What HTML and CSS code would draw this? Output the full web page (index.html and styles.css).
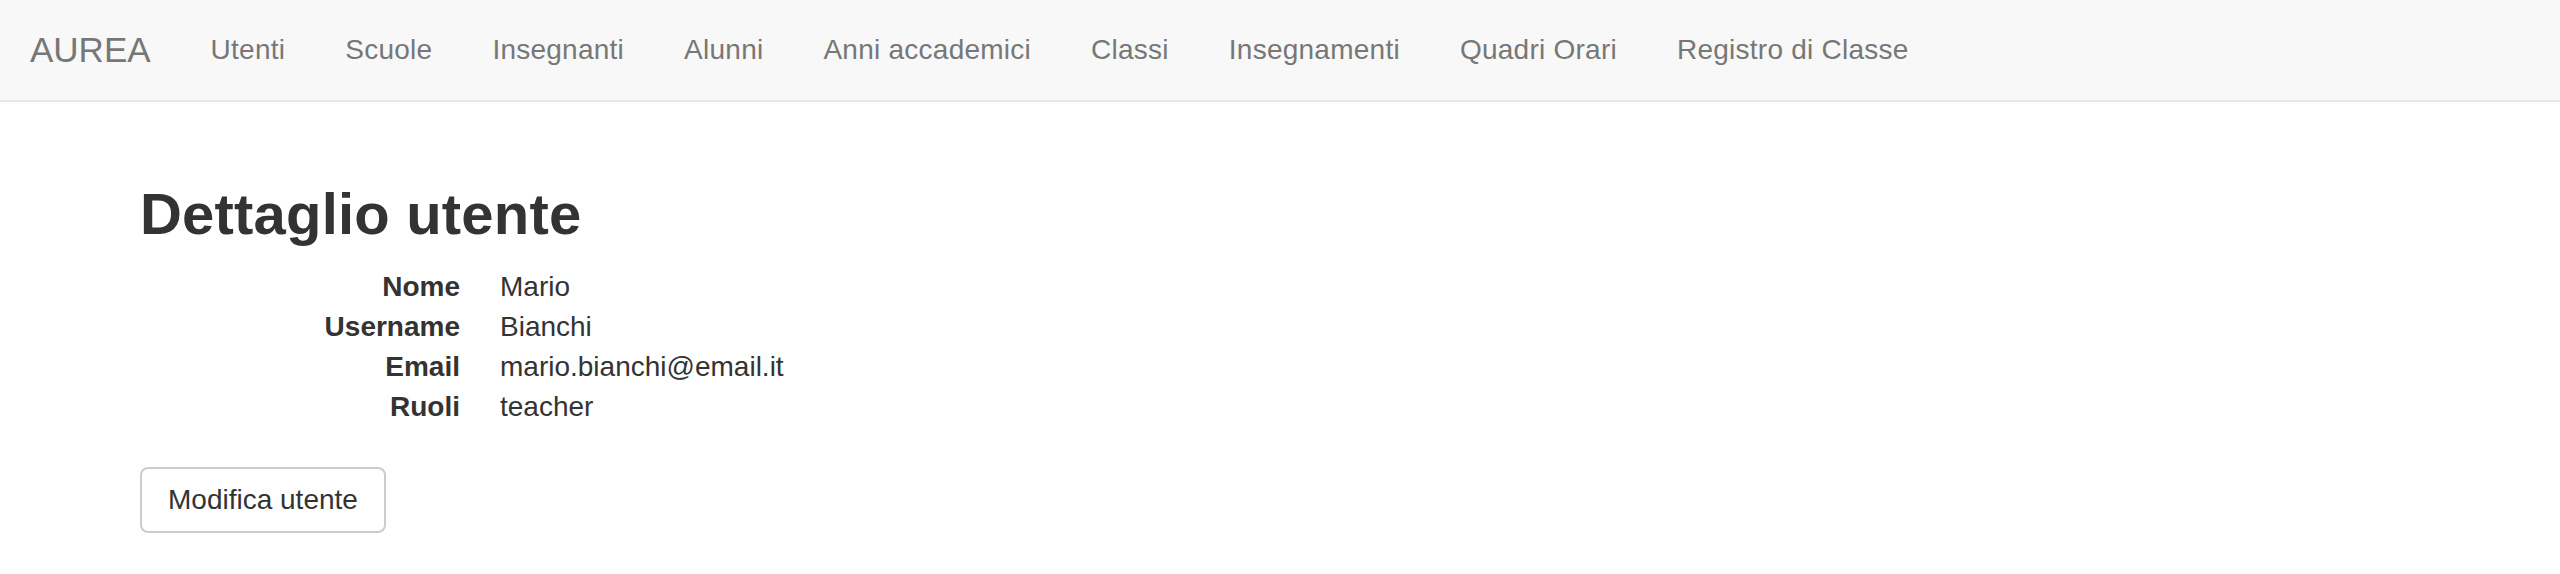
FILE: index.html
```html
<!DOCTYPE html>
<html lang="it">
<head>
<meta charset="utf-8">
<title>AUREA - Dettaglio utente</title>
<link rel="stylesheet" href="styles.css">
</head>
<body>
<nav class="navbar">
  <a class="brand" href="#">AUREA</a>
  <ul class="nav">
    <li><a href="#">Utenti</a></li>
    <li><a href="#">Scuole</a></li>
    <li><a href="#">Insegnanti</a></li>
    <li><a href="#">Alunni</a></li>
    <li><a href="#">Anni accademici</a></li>
    <li><a href="#">Classi</a></li>
    <li><a href="#">Insegnamenti</a></li>
    <li><a href="#">Quadri Orari</a></li>
    <li><a href="#">Registro di Classe</a></li>
  </ul>
</nav>
<main class="container">
  <h2 class="title">Dettaglio utente</h2>
  <dl class="details">
    <dt>Nome</dt><dd>Mario</dd>
    <dt>Username</dt><dd>Bianchi</dd>
    <dt>Email</dt><dd>mario.bianchi@email.it</dd>
    <dt>Ruoli</dt><dd>teacher</dd>
  </dl>
  <button class="btn" type="button">Modifica utente</button>
</main>
</body>
</html>
```
FILE: styles.css
```css
* { box-sizing: border-box; }
html, body { margin: 0; padding: 0; }
body {
  font-family: "Helvetica Neue", Helvetica, Arial, "Liberation Sans", sans-serif;
  font-size: 28px;
  line-height: 40px;
  color: #333;
  background: #fff;
}
.navbar {
  display: flex;
  align-items: center;
  height: 102px;
  background: #f8f8f8;
  border-bottom: 2px solid #e7e7e7;
  padding: 0 0 0 30px;
}
.brand {
  font-size: 35px;
  line-height: 40px;
  color: #777;
  text-decoration: none;
  padding: 30px 30px 30px 0;
}
.nav {
  display: flex;
  list-style: none;
  margin: 0;
  padding: 0;
}
.nav a {
  display: block;
  padding: 30px 30px;
  line-height: 40px;
  color: #777;
  text-decoration: none;
  letter-spacing: 0.25px;
}
.container {
  max-width: 2340px;
  margin: 0 auto;
  padding: 0 30px;
}
.title {
  font-size: 58px;
  font-weight: 700;
  line-height: 66px;
  letter-spacing: 0.2px;
  margin: 79px 0 20px;
  color: #333;
}
.details {
  display: grid;
  grid-template-columns: 320px 1fr;
  column-gap: 40px;
  margin: 0 0 40px;
}
.details dt {
  font-weight: 700;
  text-align: right;
}
.details dd { margin: 0; }
.btn {
  font-family: inherit;
  font-size: 28px;
  line-height: 40px;
  color: #333;
  background: #fff;
  border: 2px solid #ccc;
  border-radius: 8px;
  padding: 11px 26px;
  cursor: pointer;
}
```
